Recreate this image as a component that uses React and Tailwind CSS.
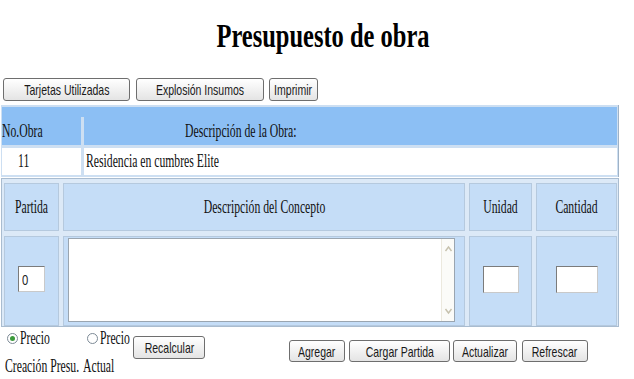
import React from "react";

function Btn({ children, className = "" }) {
  return (
    <div
      className={`h-full flex items-center justify-center border border-[#6e6e6e] rounded-[3px] bg-linear-to-b from-white to-[#e4e4e4] ${className}`}
    >
      <span className="inline-block whitespace-nowrap scale-x-[0.7] text-[15px] leading-none font-['Liberation_Sans',Arial,sans-serif] text-[#1a1a1a]">
        {children}
      </span>
    </div>
  );
}

function T({ children, className = "" }) {
  return (
    <span
      className={`inline-block whitespace-nowrap scale-x-[0.65] text-[18px] leading-none font-['Liberation_Serif',serif] text-[#111] ${className}`}
    >
      {children}
    </span>
  );
}

function Radio({ checked }) {
  return (
    <span className="inline-flex w-[11px] h-[11px] rounded-full border border-[#7d8a96] bg-white items-center justify-center shrink-0">
      {checked ? <span className="w-[5px] h-[5px] rounded-full bg-[#3c9a3c]" /> : null}
    </span>
  );
}

function Input({ className = "", children }) {
  return (
    <div
      className={`bg-white border border-t-[#7b7b7b] border-l-[#7b7b7b] border-b-[#c9c9c9] border-r-[#c9c9c9] flex items-center ${className}`}
    >
      {children}
    </div>
  );
}

export default function App() {
  const cell =
    "bg-[#c5ddf7] border border-[#b5c9de] flex items-center justify-center";
  return (
    <div className="w-[634px] h-[379px] bg-white overflow-hidden flex flex-col">
      {/* Title */}
      <div className="mt-[16px] h-[40px] flex justify-center pl-[12px]">
        <span className="inline-block whitespace-nowrap scale-x-[0.72] font-bold text-[34px] leading-[40px] font-['Liberation_Serif',serif] text-black">
          Presupuesto de obra
        </span>
      </div>

      {/* Top buttons */}
      <div className="flex mt-[22px] h-[23px]">
        <Btn className="ml-[3px] w-[127px]">Tarjetas Utilizadas</Btn>
        <Btn className="ml-[6px] w-[128px]">Explosión Insumos</Btn>
        <Btn className="ml-[5px] w-[49px]">Imprimir</Btn>
      </div>

      {/* Obra table */}
      <div className="mt-[4px] ml-[1px] w-[618px] h-[73px] bg-[#cddff2] border-r border-[#9fb2c6] pt-[2px] pl-[1px] pr-[1px] flex flex-col">
        <div className="h-[10px] bg-[#8cbff4]" />
        <div className="flex h-[28px] gap-[3px]">
          <div className="w-[79px] bg-[#8cbff4] flex items-center">
            <T className="origin-left">No.Obra</T>
          </div>
          <div className="flex-1 bg-[#8cbff4] flex items-center pl-[101px]">
            <T className="origin-left">Descripción de la Obra:</T>
          </div>
        </div>
        <div className="flex h-[27px] gap-[3px] mt-[3px]">
          <div className="w-[79px] bg-white flex items-center pl-[16px]">
            <T className="origin-left">11</T>
          </div>
          <div className="flex-1 bg-white flex items-center pl-[2px]">
            <T className="origin-left">Residencia en cumbres Elite</T>
          </div>
        </div>
      </div>

      {/* Concept table */}
      <div className="mt-[1px] ml-[1px] w-[618px] h-[151px] bg-[#dce9f7] border border-[#a9bcd0] pt-[4px] pl-[2px]">
        <div className="grid grid-cols-[55px_402px_63px_81px] grid-rows-[48px_90px] gap-x-[4px] gap-y-[5px]">
          <div className={cell}>
            <T>Partida</T>
          </div>
          <div className={cell}>
            <T>Descripción del Concepto</T>
          </div>
          <div className={cell}>
            <T>Unidad</T>
          </div>
          <div className={cell}>
            <T>Cantidad</T>
          </div>

          <div className={cell}>
            <Input className="w-[27px] h-[26px] mb-[3px] pl-[3px]">
              <span className="inline-block scale-x-[0.75] origin-left text-[15px] leading-none font-['Liberation_Sans',sans-serif] text-[#222]">
                0
              </span>
            </Input>
          </div>
          <div className="bg-[#c5ddf7] border border-[#b5c9de] pt-[1px] pl-[4px]">
            <div className="w-[387px] h-[84px] bg-white border border-[#9aa5b0] flex justify-end">
              <div className="w-[13px] h-full bg-[#fbfbf8] border-l border-[#ece9de] flex flex-col justify-between items-center py-[3px]">
                <svg width="9" height="14" viewBox="0 0 9 14">
                  <path d="M1.5 9 L4.5 5 L7.5 9" fill="none" stroke="#c6c1ad" strokeWidth="1.4" />
                </svg>
                <svg width="9" height="14" viewBox="0 0 9 14">
                  <path d="M1.5 5 L4.5 9 L7.5 5" fill="none" stroke="#c6c1ad" strokeWidth="1.4" />
                </svg>
              </div>
            </div>
          </div>
          <div className={cell}>
            <Input className="w-[36px] h-[27px] mb-[3px]" />
          </div>
          <div className={cell}>
            <Input className="w-[42px] h-[27px] mb-[3px]" />
          </div>
        </div>
      </div>

      {/* Bottom controls */}
      <div className="flex items-start">
        <div className="ml-[5px] w-[123px] flex pt-[1px]">
          <div className="w-[78px] flex flex-col">
            <div className="h-[20px] flex items-center pl-[2px] gap-[2px]">
              <Radio checked />
              <T className="origin-left">Precio</T>
            </div>
            <div className="mt-[5px] h-[26px] flex items-center">
              <T className="origin-left">Creación Presu.</T>
            </div>
          </div>
          <div className="flex flex-col">
            <div className="h-[20px] flex items-center pl-[4px] gap-[2px]">
              <Radio />
              <T className="origin-left">Precio</T>
            </div>
            <div className="mt-[5px] h-[26px] flex items-center">
              <T className="origin-left">Actual</T>
            </div>
          </div>
        </div>
        <div className="mt-[9px] h-[23px] flex">
          <Btn className="ml-[5px] w-[72px]">Recalcular</Btn>
        </div>
        <div className="mt-[13px] h-[22px] flex">
          <Btn className="ml-[84px] w-[56px]">Agregar</Btn>
          <Btn className="ml-[4px] w-[101px]">Cargar Partida</Btn>
          <Btn className="ml-[3px] w-[64px]">Actualizar</Btn>
          <Btn className="ml-[5px] w-[66px]">Refrescar</Btn>
        </div>
      </div>
    </div>
  );
}
